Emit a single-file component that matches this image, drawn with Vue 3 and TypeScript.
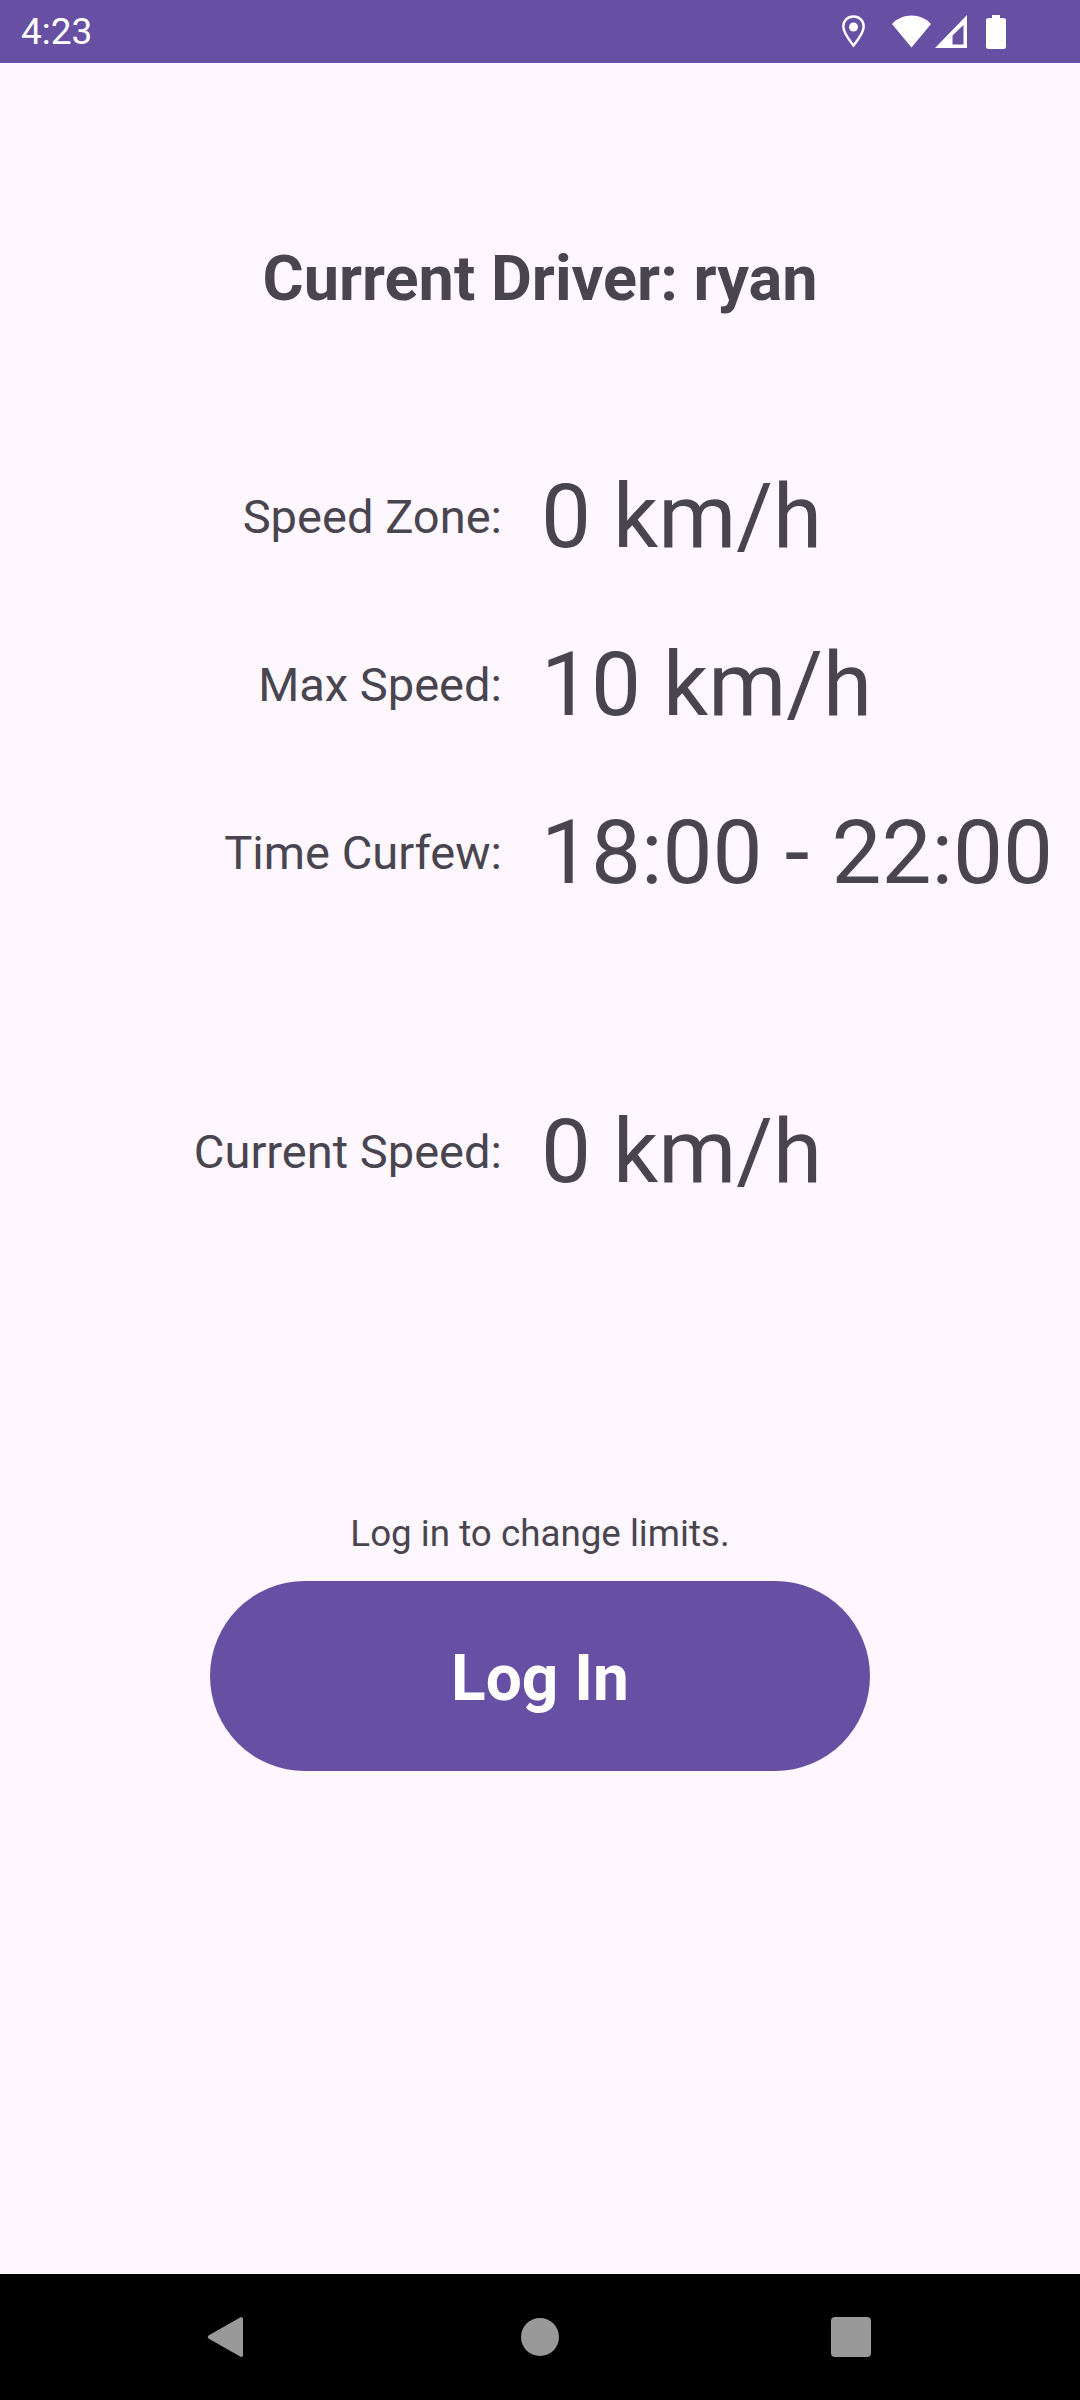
<script setup lang="ts">
const limits = [
  { label: 'Speed Zone:', value: '0 km/h' },
  { label: 'Max Speed:', value: '10 km/h' },
  { label: 'Time Curfew:', value: '18:00 - 22:00' },
]
</script>

<template>
  <div class="screen">
    <header class="status">
      <span class="time">4:23</span>
      <div class="status-icons">
        <svg class="pin" width="23" height="33" viewBox="0 0 23 33"><path d="M11.500 1.500C5.500 1.500 1.300 6 1.300 11.500c0 6.500 5.700 13 10.200 19 4.500-6 10.200-12.500 10.200-19C21.700 6 17.500 1.500 11.500 1.500z" fill="none" stroke="#fff" stroke-width="2.400"/><circle cx="11.500" cy="12" r="4.500" fill="#fff"/></svg>
        <svg class="wifi" width="39" height="33" viewBox="0 0 39 33"><path d="M0 9C5 3.500 12 .5 19.500.5S34 3.500 39 9L19.500 32.500z" fill="#fff"/></svg>
        <svg class="signal" width="32" height="33" viewBox="0 0 32 33"><path fill-rule="evenodd" d="M32 0v33H0zM28.500 10 17.500 20.500v9h11z" fill="#fff"/></svg>
        <svg class="battery" width="20" height="34" viewBox="0 0 20 34"><path d="M6 0h8v3h3.500A2.500 2.500 0 0 1 20 5.500V31.500A2.500 2.500 0 0 1 17.500 34h-15A2.500 2.500 0 0 1 0 31.500V5.500A2.500 2.500 0 0 1 2.500 3H6z" fill="#fff"/></svg>
      </div>
    </header>

    <main class="content">
      <h1 class="driver">Current Driver: ryan</h1>
      <section class="limits">
        <div v-for="row in limits" :key="row.label" class="row">
          <span class="label">{{ row.label }}</span>
          <span class="value">{{ row.value }}</span>
        </div>
      </section>
      <div class="row current">
        <span class="label">Current Speed:</span>
        <span class="value">0 km/h</span>
      </div>
      <p class="hint">Log in to change limits.</p>
      <button class="login" type="button">Log In</button>
    </main>

    <nav class="nav">
      <svg width="38" height="44" viewBox="0 0 38 44"><path d="M35 2 2.500 20.500a2 2 0 0 0 0 3L35 42a2 2 0 0 0 2-1.500V3.500A2 2 0 0 0 35 2z" fill="#999"/></svg>
      <span class="home"></span>
      <span class="recent"></span>
    </nav>
  </div>
</template>

<style>
body { margin: 0; }
</style>

<style scoped>
.screen {
  width: 1080px;
  height: 2400px;
  display: flex;
  flex-direction: column;
  background: #fef7ff;
  color: #49454f;
  font-family: Roboto, "Liberation Sans", sans-serif;
}
.status {
  height: 63px;
  flex: none;
  display: flex;
  align-items: center;
  justify-content: space-between;
  padding: 0 74px 0 21px;
  background: #6750a4;
  color: #fff;
}
.time { font-size: 37px; line-height: 63px; }
.status-icons { display: flex; align-items: center; gap: 0; }
.pin { margin-right: 27px; }
.wifi { margin-right: 4px; }
.signal { margin-right: 19px; }
.content {
  flex: 1;
  display: flex;
  flex-direction: column;
  align-items: center;
}
.driver {
  margin: 179px 0 0;
  font-size: 63px;
  line-height: 74px;
  font-weight: 700;
}
.limits {
  width: 100%;
  margin-top: 145px;
  display: flex;
  flex-direction: column;
  gap: 57px;
}
.row {
  width: 100%;
  display: grid;
  grid-template-columns: 502px 1fr;
  column-gap: 39px;
  align-items: center;
}
.label { font-size: 47.050px; text-align: right; white-space: nowrap; }
.value { font-size: 89px; line-height: 111px; white-space: nowrap; }
.current { margin-top: 188px; }
.hint {
  margin: 305px 0 0;
  font-size: 36.750px;
  line-height: 43px;
}
.login {
  width: 660px;
  height: 190px;
  margin-top: 26px;
  padding: 5px 0 0;
  border: 0;
  border-radius: 95px;
  background: #6750a4;
  color: #fff;
  font-family: inherit;
  font-size: 64px;
  font-weight: 700;
}
.nav {
  height: 126px;
  flex: none;
  display: grid;
  grid-template-columns: 438px 268px 1fr;
  align-items: center;
  background: #000;
}
.nav svg { justify-self: end; margin-right: 194px; }
.home {
  width: 38px;
  height: 38px;
  border-radius: 50%;
  background: #999;
  justify-self: start;
  margin-left: 83px;
}
.recent {
  width: 40px;
  height: 40px;
  border-radius: 4px;
  background: #999;
  justify-self: start;
  margin-left: 125px;
}
</style>
